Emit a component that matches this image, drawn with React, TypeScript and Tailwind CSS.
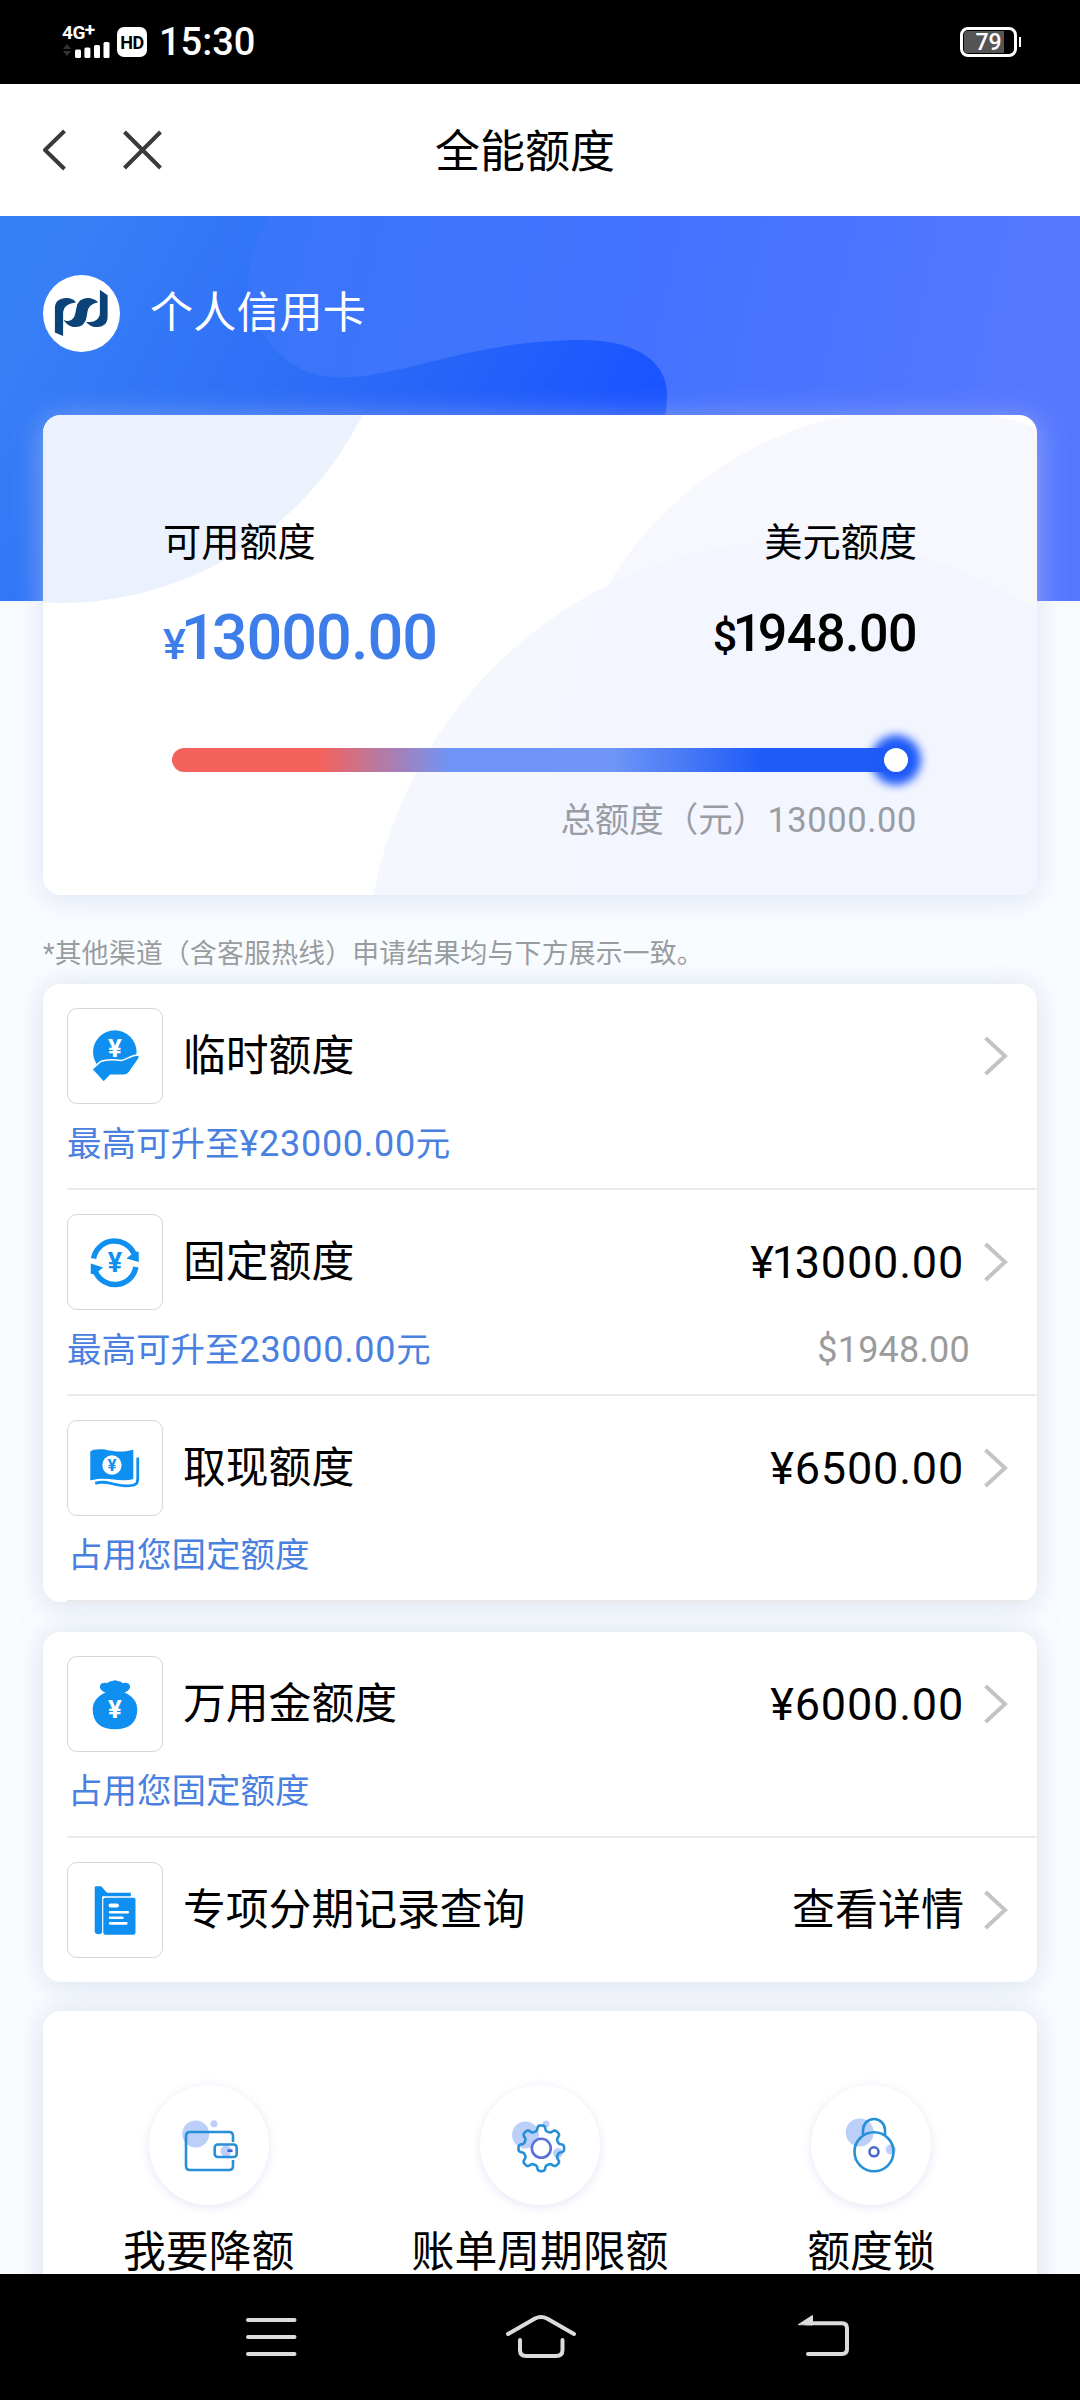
import type { ReactNode } from "react";

const BLUE = "#0f8fef";
const LINE = "#2590d8";
const TINT = "#bccff8";

function StatusBar() {
  return (
    <div className="flex h-[84px] shrink-0 items-center bg-black pl-[62px] text-white">
      <div className="flex h-8 w-12 flex-col">
        <span className="h-[16px] text-[19px] leading-[14px] font-bold tracking-[-0.5px]">
          4G<span className="relative top-[-3px]">+</span>
        </span>
        <svg className="h-[16px] w-12" viewBox="0 0 48 16">
          <path d="M1 7l4-5 4 5zM1 9l4 5 4-5z" fill="#333" />
          <rect x="13" y="7.5" width="6" height="8.5" rx="1.5" fill="#fff" />
          <rect x="22.4" y="5.5" width="6" height="10.5" rx="1.5" fill="#fff" />
          <rect x="32" y="3" width="6" height="13" rx="1.5" fill="#fff" />
          <rect x="41.5" y="0" width="6" height="16" rx="1.5" fill="#fff" />
        </svg>
      </div>
      <div className="ml-[7px] flex h-[30px] w-[30px] items-center justify-center rounded-[7px] bg-white text-[18px] font-bold tracking-[-0.5px] text-black">
        HD
      </div>
      <div className="ml-[12px] text-[38px] leading-none font-medium">15:30</div>
      <div className="relative ml-auto flex h-[30px] w-[57px] items-center justify-center rounded-[8px] border-[3px] border-white">
        <div className="absolute inset-y-[1px] left-[1px] w-[40px] rounded-l-[3px] bg-[#555]" />
        <span className="relative text-[23px] leading-none font-medium">79</span>
      </div>
      <div className="mr-[59px] ml-[2px] h-[10px] w-[2px] bg-white" />
    </div>
  );
}

function Header() {
  return (
    <div className="flex h-[132px] shrink-0 items-center bg-white">
      <svg className="ml-[40px] h-[44px] w-[125px]" viewBox="0 0 125 44" fill="none" stroke="#3a3a3a" strokeWidth="4">
        <path d="M24.5 3L5 22l19.500 19" strokeLinejoin="round" />
        <path d="M84.500 4l36 36M120.500 4l-36 36" />
      </svg>
      <h1 className="ml-[270px] pt-[4px] text-[45px] leading-none text-black">全能额度</h1>
    </div>
  );
}

function HeroWaves() {
  return (
    <svg className="absolute inset-x-0 top-0 h-[385px] w-full" viewBox="0 216 1080 385" preserveAspectRatio="none">
      <defs>
        <linearGradient id="base" x1="0" x2="1" y1="0.3" y2="0.5">
          <stop offset="0" stopColor="#3880f7" />
          <stop offset="0.33" stopColor="#2c6bf7" />
          <stop offset="0.6" stopColor="#1a55ff" />
          <stop offset="1" stopColor="#1a55ff" />
        </linearGradient>
        <linearGradient id="wave" x1="0" x2="1" y1="0" y2="0.1">
          <stop offset="0" stopColor="#3876f9" />
          <stop offset="0.5" stopColor="#4472ff" />
          <stop offset="1" stopColor="#5678ff" />
        </linearGradient>
      </defs>
      <rect y="216" width="1080" height="385" fill="url(#base)" />
      <path
        d="M269 216C244 262 240 300 262 332C282 366 314 380 352 377C410 373 480 340 580 340C640 340 668 364 667 396C665 450 640 520 620 601H1080V216Z"
        fill="url(#wave)"
      />
    </svg>
  );
}

function Logo() {
  return (
    <div className="flex h-[77px] w-[77px] items-center justify-center rounded-full bg-white">
      <svg className="h-[77px] w-[77px]" viewBox="0 0 77 77" fill="#0b4277" stroke="#0b4277" strokeWidth="1.200">
        <path d="M12.500 57V33C12.500 27 17 23.500 23 23.500C27 23.500 30 24.500 32 27C25 28 20 31 19.500 37V60Z" />
        <path d="M54 27C51 24.500 48.500 23.500 45 23.500C38 23.500 35 27 34 33L33 38C32 44 28 48 22 46C25 50 28 51.500 32 51.500C39 51.500 42 48 43 42L44 36C45 31 49 28 54 27Z" />
        <path d="M57.500 16L64 20.500V42C64 48 60 51.500 54 51.500C50 51.500 47 50 44.500 47.500C52 48.500 57.500 44 57.500 38Z" />
      </svg>
    </div>
  );
}

function BalanceCard() {
  return (
    <section className="relative mx-[43px] h-[480px] shrink-0 overflow-hidden rounded-[18px] bg-white">
      <svg className="absolute inset-0 h-full w-full" viewBox="43 415 994 480">
        <circle cx="60" cy="266" r="337" fill="#ebf2fd" />
        <circle cx="801" cy="975" r="435" fill="#f4f7fe" />
        <circle cx="919" cy="770" r="362" fill="#f2f5fe" fillOpacity="0.7" />
      </svg>
      <div className="relative flex h-full flex-col pt-[104px] pr-[120px] pl-[120px]">
        <div className="flex justify-between text-[38.200px] leading-[48px] text-black">
          <span>可用额度</span>
          <span>美元额度</span>
        </div>
        <div className="mt-[34px] flex h-[74px] justify-between">
          <div className="text-[63px] leading-[74px] font-medium tracking-[-1px] text-[#3d7dea]">
            <span className="text-[43px] font-medium">¥</span>
            <span className="-mr-[4px] -ml-[4px]">1</span>3000.00
          </div>
          <div className="text-[52px] leading-[66px] font-medium tracking-[-0.5px] text-black">
            <span className="text-[43px]">$</span>
            <span className="-mr-[4px] -ml-[4px]">1</span>948.00
          </div>
        </div>
        <div className="mt-[73px] ml-[9px] h-[24px] w-[736px] rounded-full bg-[linear-gradient(90deg,#f5625b_0,#f5625b_20%,#6e95f7_38%,#6e95f7_60%,#1f5cf7_80%,#1f5cf7_100%)]">
          <div className="ml-auto h-6 w-6 rounded-full bg-white shadow-[0_0_10px_13px_#1d5af8]" />
        </div>
        <div className="mt-[27px] text-right text-[34.500px] leading-[42px] text-[#999ca3]">
          总额度（元）<span className="tracking-[0.600px]">13000.00</span>
        </div>
      </div>
    </section>
  );
}

function Yen({ x, y, size, fill }: { x: number; y: number; size: number; fill: string }) {
  return (
    <text x={x} y={y} fontSize={size} fill={fill} textAnchor="middle" fontWeight={700} fontFamily="Roboto">
      ¥
    </text>
  );
}

function HandIcon() {
  return (
    <>
      <circle cx="47.300" cy="43.500" r="22" fill={BLUE} />
      <Yen x={47.3} y={49} size={26} fill="#fff" />
      <path
        d="M24 61L33 53C38 51 46 51 54 52C60 51 64 46 71 46.500C73 47 72 50 70.500 52L62 64Q60 67 56 67H43L36 74Z"
        fill={BLUE}
        stroke="#fff"
        strokeWidth="1.600"
      />
    </>
  );
}

function CycleIcon() {
  return (
    <>
      <g fill="none" stroke={BLUE} strokeWidth="5.500">
        <path d="M25.800 44A21.500 21.500 0 0 1 66.500 38.800" />
        <path d="M68.600 52.600A21.500 21.500 0 0 1 27.900 57.800" />
      </g>
      <path d="M69 37L71.500 37.500V47.500L59 44L64 40ZM25.500 60L23 59.500V49L35.500 53L30.500 57Z" fill={BLUE} />
      <Yen x={47.3} y={58} size={27} fill={BLUE} />
    </>
  );
}

function CashIcon() {
  return (
    <>
      <path d="M22.500 31Q24 28.500 33 28.500C41 28.500 49 33.500 66 29V58.500C50 63 42 55 22.500 60Z" fill={BLUE} />
      <path d="M27.500 63C38 59 46 65.500 58 65.500C68 65.500 70.500 64 70.500 58V37" fill="none" stroke={BLUE} strokeWidth="2.800" />
      <circle cx="44.400" cy="44.500" r="9.800" fill="#fff" />
      <Yen x={44.4} y={50.5} size={17} fill={BLUE} />
    </>
  );
}

function BagIcon() {
  return (
    <>
      <path
        d="M38 36C34 34 31.500 32 32.500 29C33 26 37 25.500 39.500 26.500C42 24 45 24.500 47.500 23.500C50 24.500 53 24 55.500 26.500C58 25.500 62 26 62.500 29C63.500 32 61 34 57 36C66 40 70 46 70 53C70 66 62 73 47.500 73C33 73 25 66 25 53C25 46 29 40 38 36Z"
        fill={BLUE}
      />
      <Yen x={47.5} y={62} size={26} fill="#fff" />
    </>
  );
}

function RecordIcon() {
  return (
    <>
      <path d="M27 25Q27 23.500 28.500 23.500H33.500L39.500 30H63.500V33.500H34.500V70Q34 72 31 72Q27 72 27 69Z" fill={BLUE} />
      <rect x="35.700" y="35" width="32.500" height="37.500" rx="2" fill={BLUE} />
      <g stroke="#fff" strokeLinecap="round">
        <path d="M43 43h6.500" strokeWidth="4" />
        <path d="M42.500 49.700h18M42.500 55.400h12.500M42.500 61h16.500" strokeWidth="2.600" />
      </g>
    </>
  );
}

function Chevron() {
  return (
    <svg className="mr-[28px] ml-[19px] h-[42px] w-[26px]" viewBox="0 0 26 42" fill="none" stroke="#c4c4c4" strokeWidth="4">
      <path d="M2.500 3L22 21L2.500 39" />
    </svg>
  );
}

function Amount({ value }: { value: string }) {
  const startsWithOne = value[1] === "1";
  return (
    <span className="text-[45px] tracking-[0.800px]">
      ¥
      {startsWithOne && <span className="-mr-[3px] -ml-[3px]">1</span>}
      {value.slice(startsWithOne ? 2 : 1)}
    </span>
  );
}

type RowProps = {
  icon: ReactNode;
  label: string;
  amount?: string;
  action?: string;
  note?: ReactNode;
  subValue?: string;
  divider?: boolean;
};

function Row({ icon, label, amount, action, note, subValue, divider }: RowProps) {
  return (
    <div className="ml-[24px]">
      <div className="flex items-center pt-[24px]">
        <div className="h-[96px] w-[96px] rounded-[10px] border border-[#d6d6da]">
          <svg className="h-[94px] w-[94px]" viewBox="0 0 95 95">
            {icon}
          </svg>
        </div>
        <span className="ml-[20px] text-[42.800px] leading-none text-black">{label}</span>
        <span className="ml-auto text-[43px] leading-none text-black">{amount ? <Amount value={amount} /> : action}</span>
        <Chevron />
      </div>
      {note && (
        <div className="flex h-[84px] items-center justify-between pr-[67px] pb-[4px] text-[34.500px] text-[#4a80e0]">
          <span>{note}</span>
          {subValue && <span className="text-[36px] tracking-[0.200px] text-[#9b9b9b]">{subValue}</span>}
        </div>
      )}
      {divider && <div className="h-[2px] bg-[#e9e9ea]" />}
    </div>
  );
}

function RaiseNote({ amount }: { amount: string }) {
  return (
    <>
      最高可升至<span className="text-[36px] tracking-[0.700px]">{amount}</span>元
    </>
  );
}

function gearPath(cx: number, cy: number) {
  const points: string[] = [];
  for (let i = 0; i < 160; i++) {
    const a = (i / 160) * Math.PI * 2;
    const r = 20.3 + 2.6 * Math.tanh(2.2 * Math.cos(8 * a));
    points.push(`${(cx + r * Math.cos(a)).toFixed(2)} ${(cy + r * Math.sin(a)).toFixed(2)}`);
  }
  return `M${points.join("L")}Z`;
}

function WalletIcon() {
  return (
    <g fill="none" stroke={LINE} strokeWidth="2.600">
      <circle cx="46.700" cy="49" r="13.500" fill={TINT} stroke="none" />
      <circle cx="65" cy="38.700" r="3.500" fill={TINT} stroke="none" />
      <path d="M84 57V51Q84 47 80 47H41Q37 47 37 51V81Q37 85 41 85H80Q84 85 84 81V75" />
      <circle cx="77" cy="66" r="5.500" fill={TINT} stroke="none" />
      <rect x="65.700" y="59.500" width="22" height="12.500" rx="3" />
      <path d="M78.500 65.700h5" stroke="#3f62d0" />
    </g>
  );
}

function GearIcon() {
  return (
    <g fill="none" stroke={LINE} strokeWidth="2.600">
      <circle cx="45.500" cy="50" r="13.500" fill={TINT} stroke="none" />
      <circle cx="66" cy="39" r="3.500" fill={TINT} stroke="none" />
      <circle cx="78" cy="68" r="5" fill={TINT} stroke="none" />
      <path d={gearPath(61.3, 63.3)} />
      <circle cx="61.300" cy="63.300" r="9.500" stroke="#5a72d8" fill="#fff" />
    </g>
  );
}

function LockIcon() {
  return (
    <g fill="none" stroke={LINE} strokeWidth="2.600">
      <circle cx="48.700" cy="47.500" r="14" fill={TINT} stroke="none" />
      <circle cx="79.700" cy="64.500" r="5" fill={TINT} stroke="none" />
      <circle cx="63" cy="66.800" r="19.500" />
      <path d="M52 50V45A11 11 0 0 1 74 45V50" />
      <circle cx="63" cy="66.800" r="4.500" stroke="#4a68cc" />
    </g>
  );
}

function Action({ icon, label }: { icon: ReactNode; label: string }) {
  return (
    <div className="flex flex-1 flex-col items-center">
      <div className="h-[120px] w-[120px] rounded-full bg-white shadow-[0_2px_8px_1px_rgba(205,208,240,0.45)]">
        <svg className="h-[120px] w-[120px]" viewBox="0 0 120 120">
          {icon}
        </svg>
      </div>
      <span className="mt-[25px] text-[42.800px] leading-[44px] whitespace-nowrap text-black">{label}</span>
    </div>
  );
}

function NavBar() {
  return (
    <nav className="relative flex h-[126px] shrink-0 items-center bg-black">
      <svg className="h-[126px] w-full" viewBox="0 2274 1080 126" fill="none" stroke="#dcdcdc" strokeWidth="4" strokeLinecap="round" strokeLinejoin="round">
        <path d="M248 2320H294.500M248 2337H294.500M248 2354H294.500" />
        <path d="M508 2334L535 2318.500Q541 2315.500 547 2318.500L574 2334" />
        <path d="M520 2340V2350Q520 2356 526 2356H556Q562.500 2356 562.500 2350V2340" />
        <path d="M806 2323.300H842Q847 2323.300 847 2328.300V2349Q847 2354 842 2354H808" />
        <path d="M798.500 2324.500L812.500 2315.500V2324.500Z" fill="#dcdcdc" strokeWidth="1" />
      </svg>
    </nav>
  );
}

const CARD = "relative mx-[43px] shrink-0 overflow-hidden rounded-[18px] bg-white shadow-[0_2px_28px_rgba(190,200,222,0.55)]";

export default function App() {
  return (
    <div className="flex h-[2400px] w-[1080px] flex-col overflow-hidden bg-[#f9fcff] font-['Roboto','Noto_Sans_CJK_SC',sans-serif]">
      <StatusBar />
      <Header />
      <main className="relative flex min-h-0 flex-1 flex-col overflow-hidden">
        <HeroWaves />
        <div className="relative flex h-[199px] shrink-0 items-start pt-[59px] pl-[43px]">
          <Logo />
          <span className="ml-[30px] text-[43.200px] leading-[77px] text-white">个人信用卡</span>
        </div>
        <div className="relative shrink-0">
          <div className="absolute inset-x-[43px] inset-y-0 rounded-[18px] shadow-[0_4px_30px_rgba(196,205,232,0.55)]" />
          <BalanceCard />
        </div>
        <p className="relative mt-[40px] h-[49px] shrink-0 pl-[43px] text-[26.800px] leading-[38px] tracking-[0.250px] text-[#999c9f]">
          *其他渠道（含客服热线）申请结果均与下方展示一致。
        </p>
        <section className={`${CARD} h-[618px]`}>
          <Row icon={<HandIcon />} label="临时额度" note={<RaiseNote amount="¥23000.00" />} divider />
          <Row icon={<CycleIcon />} label="固定额度" amount="¥13000.00" note={<RaiseNote amount="23000.00" />} subValue="$1948.00" divider />
          <Row icon={<CashIcon />} label="取现额度" amount="¥6500.00" note={<span className="ml-[1px]">占用您固定额度</span>} divider />
        </section>
        <section className={`${CARD} mt-[30px] h-[350px]`}>
          <Row icon={<BagIcon />} label="万用金额度" amount="¥6000.00" note={<span className="ml-[1px]">占用您固定额度</span>} divider />
          <Row icon={<RecordIcon />} label="专项分期记录查询" action="查看详情" />
        </section>
        <section className={`${CARD} mt-[29px] flex h-[300px] pt-[74px]`}>
          <Action icon={<WalletIcon />} label="我要降额" />
          <Action icon={<GearIcon />} label="账单周期限额" />
          <Action icon={<LockIcon />} label="额度锁" />
        </section>
      </main>
      <NavBar />
    </div>
  );
}
